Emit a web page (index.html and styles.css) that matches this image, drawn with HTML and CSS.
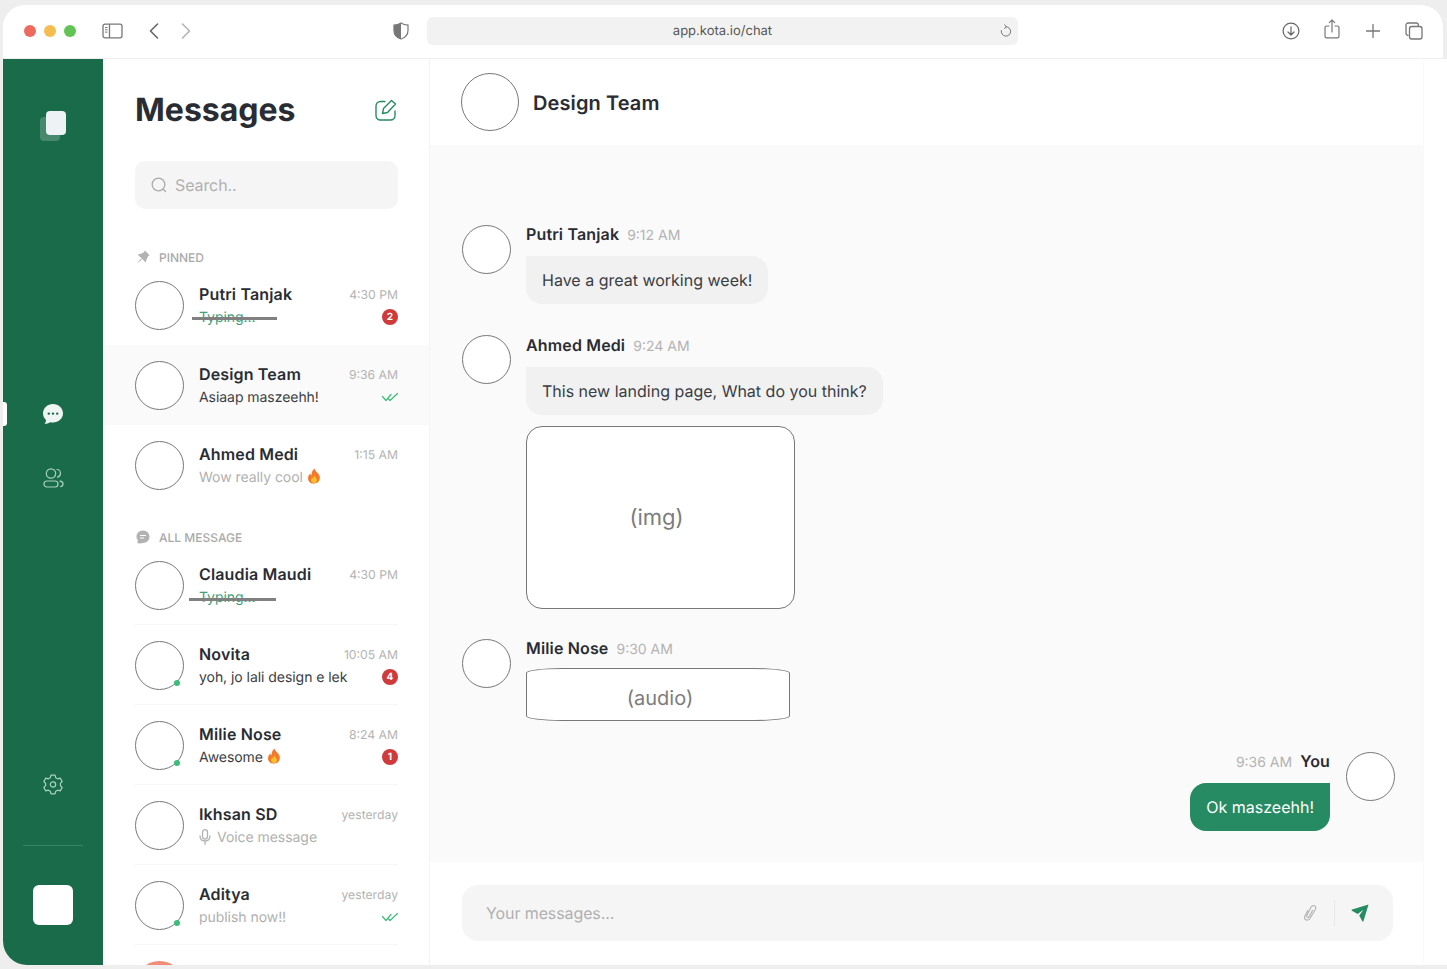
FILE: index.html
```html
<!DOCTYPE html>
<html lang="en">
<head>
    <meta charset="UTF-8">
    <meta name="viewport" content="width=device-width, initial-scale=1.0">
    <title>Kota Chat</title>
    <link rel="stylesheet" href="styles.css">
</head>
<body>
    <svg class="defs" width="0" height="0" aria-hidden="true">
        <symbol id="flame" viewBox="0 0 14 16">
            <path d="M7.4 0.4C8 3 11 4.600 12.300 7.200C13.800 10.300 12.300 15.400 7 15.600C2.200 15.700 0.300 11.700 1.300 8.500C1.700 7.200 2.500 6.200 3.300 5.500C3.400 6.500 3.800 7.300 4.500 7.700C4.300 5 5.300 2.200 7.400 0.400Z" fill="#f4792b"/>
            <path d="M7.300 7.500C7.700 9 9.900 10 9.900 12.200C9.900 14 8.600 15.100 7 15.100C5.400 15.100 4.100 14 4.100 12.300C4.100 10.900 5 10.200 5.600 9.500C6 10 6.300 10.300 6.700 10.400C6.500 9.500 6.600 8.400 7.300 7.500Z" fill="#fbc02d"/>
        </symbol>
        <symbol id="ticks" viewBox="0 0 16 10">
            <path d="M0.500 4.500L4 8.500L9 2.500M6.500 6.800L8 8.500L15.500 1.500" fill="none" stroke="#3dbb78" stroke-width="1.200" stroke-linecap="round" stroke-linejoin="round"/>
        </symbol>
    </svg>

    <div class="window">
        <header class="toolbar">
            <span class="light light-red"></span>
            <span class="light light-yellow"></span>
            <span class="light light-green"></span>

            <svg class="tool tool-sidebar" width="21" height="16" viewBox="0 0 21 16" fill="none" stroke="#777" stroke-width="1.300">
                <rect x="1" y="1.200" width="19" height="13.600" rx="2"/>
                <path d="M7.500 1.200V14.800"/>
                <path d="M3 4.500H5.500M3 6.800H5.500M3 9.100H5.500" stroke-width="1"/>
            </svg>
            <svg class="tool tool-back" width="10" height="16" viewBox="0 0 10 16" fill="none" stroke="#666" stroke-width="1.600" stroke-linecap="round" stroke-linejoin="round">
                <path d="M8.500 1L1.500 8L8.500 15"/>
            </svg>
            <svg class="tool tool-forward" width="10" height="16" viewBox="0 0 10 16" fill="none" stroke="#b5b5b5" stroke-width="1.600" stroke-linecap="round" stroke-linejoin="round">
                <path d="M1.500 1L8.500 8L1.500 15"/>
            </svg>
            <svg class="tool tool-shield" width="16" height="18" viewBox="0 0 16 18" fill="none">
                <path d="M8 1C10 2.300 12.500 3 15 3.100V8.500C15 12.500 12 15.700 8 17C4 15.700 1 12.500 1 8.500V3.100C3.500 3 6 2.300 8 1Z" stroke="#777" stroke-width="1.200"/>
                <path d="M8 1C6 2.300 3.500 3 1 3.100V8.500C1 12.500 4 15.700 8 17Z" fill="#777"/>
            </svg>

            <div class="address">
                <span>app.kota.io/chat</span>
                <svg class="address-reload" width="12" height="14" viewBox="0 0 12 14" fill="none" stroke="#777" stroke-width="1" stroke-linecap="round" stroke-linejoin="round">
                    <path d="M1.300 6.500A4.700 4.700 0 1 0 6 2.700"/>
                    <path d="M4.500 0.800L6.500 2.700L4.500 4.500"/>
                </svg>
            </div>

            <svg class="tool tool-download" width="18" height="18" viewBox="0 0 18 18" fill="none" stroke="#666" stroke-width="1.200" stroke-linecap="round" stroke-linejoin="round">
                <circle cx="9" cy="9" r="7.900"/>
                <path d="M9 4.800V12.800M6 10L9 13L12 10"/>
            </svg>
            <svg class="tool tool-share" width="16" height="20" viewBox="0 0 16 20" fill="none" stroke="#777" stroke-width="1.200" stroke-linecap="round" stroke-linejoin="round">
                <path d="M5 7H2.600C1.700 7 1 7.700 1 8.600V17.200C1 18.100 1.700 18.800 2.600 18.800H13.400C14.300 18.800 15 18.100 15 17.200V8.600C15 7.700 14.300 7 13.400 7H11"/>
                <path d="M8 13V1.200M5.300 3.600L8 1L10.700 3.600"/>
            </svg>
            <svg class="tool tool-plus" width="14" height="14" viewBox="0 0 14 14" fill="none" stroke="#777" stroke-width="1.300" stroke-linecap="round">
                <path d="M7 0.500V13.500M0.500 7H13.500"/>
            </svg>
            <svg class="tool tool-tabs" width="18" height="18" viewBox="0 0 18 18" fill="none" stroke="#777" stroke-width="1.300">
                <path d="M3.500 13.300H3C1.900 13.300 1 12.400 1 11.300V3C1 1.900 1.900 1 3 1H11.300C12.400 1 13.300 1.900 13.300 3V4"/>
                <rect x="4.500" y="4.500" width="12.500" height="12.500" rx="2.200"/>
            </svg>
        </header>

        <main class="app">
            <nav class="rail">
                <div class="rail-logo">
                    <span class="rail-logo-back"></span>
                    <span class="rail-logo-front"></span>
                </div>

                <span class="rail-marker"></span>
                <svg class="rail-chat" width="20" height="20" viewBox="0 0 20 20">
                    <path d="M10 0C15.500 0 20 4.100 20 9.300C20 14.500 15.500 18.600 10 18.600C9 18.600 8 18.500 7 18.200C5.500 19.200 3.700 19.800 1.500 19.800C2.500 18.500 3 17.300 3 15.900C1.100 14.300 0 12 0 9.300C0 4.100 4.500 0 10 0Z" fill="#eff5f2"/>
                    <circle cx="5.800" cy="9.600" r="1.200" fill="#1a6b4a"/>
                    <circle cx="10" cy="9.600" r="1.200" fill="#1a6b4a"/>
                    <circle cx="14.200" cy="9.600" r="1.200" fill="#1a6b4a"/>
                </svg>
                <svg class="rail-users" width="21" height="20" viewBox="0 0 21 20" fill="none" stroke="#a9d1c0" stroke-width="1.200" stroke-linecap="round">
                    <circle cx="8" cy="5.500" r="4.700"/>
                    <rect x="1" y="13" width="14" height="6" rx="3"/>
                    <path d="M14 1.500C16 1.500 17.500 3.300 17.500 5.300C17.500 7.200 16.200 8.800 14.500 9.200M17 13.200C18.900 13.400 20 14.500 20 16C20 17.300 19 18.400 17.700 18.700"/>
                </svg>
                <svg class="rail-gear" width="20" height="21" viewBox="0 0 20 21" fill="none" stroke="#a9d1c0" stroke-width="1.200" stroke-linejoin="round">
                    <circle cx="10" cy="10.500" r="2.700"/>
                    <path d="M8 1.200H12L12.700 3.700L14.700 4.800L17.200 4.100L19.200 7.500L17.400 9.300V11.700L19.200 13.500L17.200 16.900L14.700 16.200L12.700 17.300L12 19.800H8L7.300 17.300L5.300 16.200L2.800 16.900L0.800 13.500L2.600 11.700V9.300L0.800 7.500L2.800 4.100L5.300 4.800L7.300 3.700Z"/>
                </svg>
                <span class="rail-divider"></span>
                <div class="rail-avatar"></div>
            </nav>

            <section class="inbox">
                <div class="inbox-head">
                    <h1>Messages</h1>
                    <svg class="inbox-edit" width="22" height="22" viewBox="0 0 22 22" fill="none" stroke="#268b62" stroke-width="1.400" stroke-linecap="round" stroke-linejoin="round">
                        <path d="M10 2.500H5.500C3 2.500 1 4.500 1 7V16.500C1 19 3 21 5.500 21H15.500C18 21 20 19 20 16.500V12"/>
                        <path d="M16.500 1.500L20.500 5L12.500 13.500L7.500 14.500L8.500 9.500Z"/>
                    </svg>
                </div>

                <div class="search">
                    <svg width="16" height="16" viewBox="0 0 16 16" fill="none" stroke="#aaa" stroke-width="1.300" stroke-linecap="round">
                        <circle cx="7.500" cy="7.500" r="6.300"/>
                        <path d="M12.300 12.300L14.500 14.500"/>
                    </svg>
                    <span>Search..</span>
                </div>

                <div class="section-label section-pinned">
                    <svg width="14" height="14" viewBox="0 0 14 14" fill="#b2b2b2">
                        <path d="M8.800 0.600L13.600 5.200L12.200 6L10.400 9.800L9.800 12.400L1.600 4.600L4.400 4L8 2.200Z"/>
                        <path d="M4.800 8.800L0.800 13.200L5.800 9.800Z"/>
                    </svg>
                    PINNED
                </div>

                <article class="row">
                    <div class="avatar"></div>
                    <div class="row-body">
                        <div class="row-line"><b>Putri Tanjak</b><time>4:30 PM</time></div>
                        <div class="row-line">
                            <span class="sub sub-typing">Typing...</span>
                            <span class="badge">2</span>
                        </div>
                    </div>
                </article>
                <article class="row row-active">
                    <div class="avatar"></div>
                    <div class="row-body">
                        <div class="row-line"><b>Design Team</b><time>9:36 AM</time></div>
                        <div class="row-line">
                            <span class="sub sub-dark">Asiaap maszeehh!</span>
                            <svg class="tick" width="16" height="10"><use href="#ticks"/></svg>
                        </div>
                    </div>
                </article>
                <article class="row">
                    <div class="avatar"></div>
                    <div class="row-body">
                        <div class="row-line"><b>Ahmed Medi</b><time>1:15 AM</time></div>
                        <div class="row-line">
                            <span class="sub">Wow really cool <svg class="fire" width="14" height="16"><use href="#flame"/></svg></span>
                        </div>
                    </div>
                </article>

                <div class="section-label section-all">
                    <svg width="14" height="14" viewBox="0 0 14 14">
                        <path d="M7 0.500C10.700 0.500 13.500 3.300 13.500 6.800C13.500 10.300 10.700 13 7 13C4.500 13.500 2.500 13.500 1 13C2 12 2 11 1.800 10.300C1 9.300 0.500 8.100 0.500 6.800C0.500 3.300 3.300 0.500 7 0.500Z" fill="#b2b2b2"/>
                        <path d="M4.500 5.500H9.500M4.500 8H7.500" stroke="#fff" stroke-width="1.200" stroke-linecap="round"/>
                    </svg>
                    ALL MESSAGE
                </div>

                <article class="row row-split">
                    <div class="avatar"></div>
                    <div class="row-body">
                        <div class="row-line"><b>Claudia Maudi</b><time>4:30 PM</time></div>
                        <div class="row-line"><span class="sub sub-typing sub-typing-wide">Typing...</span></div>
                    </div>
                </article>
                <article class="row row-split">
                    <div class="avatar avatar-online"></div>
                    <div class="row-body">
                        <div class="row-line"><b>Novita</b><time>10:05 AM</time></div>
                        <div class="row-line">
                            <span class="sub sub-dark">yoh, jo lali design e lek</span>
                            <span class="badge">4</span>
                        </div>
                    </div>
                </article>
                <article class="row row-split">
                    <div class="avatar avatar-online"></div>
                    <div class="row-body">
                        <div class="row-line"><b>Milie Nose</b><time>8:24 AM</time></div>
                        <div class="row-line">
                            <span class="sub sub-dark">Awesome <svg class="fire" width="14" height="16"><use href="#flame"/></svg></span>
                            <span class="badge">1</span>
                        </div>
                    </div>
                </article>
                <article class="row row-split">
                    <div class="avatar"></div>
                    <div class="row-body">
                        <div class="row-line"><b>Ikhsan SD</b><time>yesterday</time></div>
                        <div class="row-line">
                            <span class="sub sub-voice">
                                <svg width="12" height="16" viewBox="0 0 12 16" fill="none" stroke="#b2b2b2" stroke-width="1.300" stroke-linecap="round">
                                    <rect x="3.500" y="0.700" width="5" height="9.300" rx="2.500"/>
                                    <path d="M1 6.800C1 10 3 12 6 12C9 12 11 10 11 6.800M6 12V15.300"/>
                                </svg>
                                Voice message
                            </span>
                        </div>
                    </div>
                </article>
                <article class="row row-split">
                    <div class="avatar avatar-online"></div>
                    <div class="row-body">
                        <div class="row-line"><b>Aditya</b><time>yesterday</time></div>
                        <div class="row-line">
                            <span class="sub">publish now!!</span>
                            <svg class="tick" width="16" height="10"><use href="#ticks"/></svg>
                        </div>
                    </div>
                </article>
                <article class="row">
                    <div class="avatar avatar-coral"></div>
                </article>
            </section>

            <section class="chat">
                <div class="chat-head">
                    <div class="avatar avatar-large"></div>
                    <h2>Design Team</h2>
                </div>

                <div class="thread">
                    <div class="msg msg-first">
                        <div class="avatar"></div>
                        <div class="msg-body">
                            <div class="msg-meta"><b>Putri Tanjak</b><time>9:12 AM</time></div>
                            <p class="bubble">Have a great working week!</p>
                        </div>
                    </div>
                    <div class="msg msg-second">
                        <div class="avatar"></div>
                        <div class="msg-body">
                            <div class="msg-meta"><b>Ahmed Medi</b><time>9:24 AM</time></div>
                            <p class="bubble">This new landing page, What do you think?</p>
                            <div class="attach-img"><span>(img)</span></div>
                        </div>
                    </div>
                    <div class="msg msg-third">
                        <div class="avatar"></div>
                        <div class="msg-body">
                            <div class="msg-meta"><b>Milie Nose</b><time>9:30 AM</time></div>
                            <div class="attach-audio">(audio)</div>
                        </div>
                    </div>
                    <div class="msg msg-own">
                        <div class="avatar"></div>
                        <div class="msg-body">
                            <div class="msg-meta"><time>9:36 AM</time><b>You</b></div>
                            <p class="bubble bubble-own">Ok maszeehh!</p>
                        </div>
                    </div>
                </div>

                <div class="composer">
                    <div class="composer-box">
                        <span class="composer-text">Your messages...</span>
                        <svg class="composer-clip" width="14" height="16" viewBox="0 0 14 16" fill="none" stroke="#b5b5b5" stroke-width="1.200" stroke-linecap="round" stroke-linejoin="round">
                            <path d="M4.800 5.500L2 10.800C1 12.800 1.800 14.600 3.300 15C4.800 15.400 6.300 14.800 7.200 13L12.300 4.500C13.200 2.700 12.700 1.300 11.400 0.800C10 0.300 8.800 0.900 8 2.300L3.900 10.200C3.400 11.300 3.700 12 4.400 12.300C5.100 12.600 5.800 12.300 6.300 11.400L9.600 5.300"/>
                        </svg>
                        <span class="composer-divider"></span>
                        <svg class="composer-send" width="18" height="18" viewBox="0 0 18 18">
                            <path d="M17.500 0.500L12.500 17C12.300 17.600 11.600 17.700 11.300 17.200L8.200 11.500L12.500 5.700L6.600 9.900L0.900 6.800C0.400 6.500 0.500 5.800 1.100 5.600Z" fill="#268b62"/>
                        </svg>
                    </div>
                </div>
            </section>
        </main>
    </div>
</body>
</html>
```

FILE: styles.css
```css
* {
    box-sizing: border-box;
}

html, body {
    height: 100%;
}

body {
    margin: 0;
    padding: 5px 0 4px 3px;
    background-color: #eeeeee;
    color: #292c33;
    font-family: Inter, "Liberation Sans", sans-serif;
    text-rendering: geometricPrecision;
    overflow: hidden;
}

h1, h2, p {
    margin: 0;
}

time {
    color: #b3b3b3;
    font-size: 12.2px;
    font-weight: 400;
}

.defs {
    position: absolute;
}

.window {
    display: flex;
    flex-direction: column;
    height: 960px;
}

/* browser bar */

.toolbar {
    display: flex;
    align-items: center;
    flex: none;
    height: 53px;
    margin-right: 4px;
    padding-left: 21px;
    padding-bottom: 2px;
    background-color: #ffffff;
    border-radius: 22px 22px 0 0;
}

.light {
    width: 12px;
    height: 12px;
    margin-right: 8px;
    border-radius: 50%;
}

.light-red {
    background-color: #ee6a5f;
}

.light-yellow {
    background-color: #f5bd4f;
}

.light-green {
    background-color: #61c454;
}

.tool {
    flex: none;
}

.tool-sidebar {
    margin-left: 18px;
}

.tool-back {
    margin-left: 26px;
}

.tool-forward {
    margin-left: 22px;
}

.tool-shield {
    margin-left: 202px;
}

.address {
    position: relative;
    width: 591px;
    height: 28px;
    margin-left: 18px;
    background-color: #f2f2f2;
    border-radius: 6px;
    color: #555555;
    font-size: 13px;
    line-height: 28px;
    text-align: center;
}

.address-reload {
    position: absolute;
    top: 7px;
    right: 6px;
}

.tool-download {
    margin-left: 264px;
}

.tool-share {
    margin-left: 24px;
    margin-top: -3px;
}

.tool-plus {
    margin-left: 26px;
}

.tool-tabs {
    margin-left: 25px;
}

/* app */

.app {
    display: flex;
    flex: 1;
    min-height: 0;
    background-color: #ffffff;
    border-top: 1px solid #eeeeee;
    border-bottom-left-radius: 24px;
    overflow: hidden;
}

.rail {
    position: relative;
    display: flex;
    flex-direction: column;
    align-items: center;
    flex: none;
    width: 100px;
    padding-top: 52px;
    background-color: #1a6b4a;
}

.rail-logo {
    position: relative;
    width: 26px;
    height: 30px;
}

.rail-logo-back {
    position: absolute;
    left: 0;
    bottom: 0;
    width: 20px;
    height: 24px;
    background-color: rgba(255, 255, 255, 0.2);
    border-radius: 4px;
}

.rail-logo-front {
    position: absolute;
    right: 0;
    top: 0;
    width: 20px;
    height: 24px;
    background-color: #eff2f5;
    border-radius: 4px;
}

.rail-marker {
    position: absolute;
    top: 343px;
    left: 0;
    width: 4px;
    height: 24px;
    background-color: #ffffff;
    border-radius: 0 3px 3px 0;
}

.rail-chat {
    margin-top: 263px;
}

.rail-users {
    margin-top: 44px;
}

.rail-gear {
    margin-top: 286px;
}

.rail-divider {
    width: 60px;
    height: 1px;
    margin-top: 50px;
    background-color: #3a8466;
}

.rail-avatar {
    width: 40px;
    height: 40px;
    margin-top: 39px;
    background-color: #ffffff;
    border-radius: 6px;
}

/* conversation list */

.inbox {
    flex: none;
    width: 327px;
    border-right: 1px solid #f4f4f4;
    overflow: hidden;
}

.inbox-head {
    display: flex;
    align-items: center;
    justify-content: space-between;
    padding: 31px 31px 0 32px;
}

.inbox-head h1 {
    font-size: 32px;
    font-weight: 700;
    line-height: 39px;
}

.inbox-edit {
    margin-right: 1px;
}

.search {
    display: flex;
    align-items: center;
    gap: 8px;
    height: 48px;
    margin: 32px 31px 0 32px;
    padding-left: 16px;
    background-color: #f5f5f5;
    border-radius: 10px;
    color: #b0b0b0;
    font-size: 16px;
    letter-spacing: -0.1px;
}

.section-label {
    display: flex;
    align-items: center;
    gap: 9px;
    height: 16px;
    padding-left: 33px;
    color: #a9a9a9;
    font-size: 12px;
    font-weight: 500;
}

.section-pinned {
    margin-top: 40px;
}

.section-all {
    margin-top: 24px;
}

.row {
    display: flex;
    gap: 15px;
    height: 80px;
    padding: 16px 31px 0 32px;
}

.row-active {
    background-color: #fafafa;
}

.row-split {
    position: relative;
}

.row-split::after {
    content: "";
    position: absolute;
    left: 32px;
    right: 31px;
    bottom: 0;
    height: 1px;
    background-color: #f6f6f6;
}

.row-body {
    flex: 1;
    min-width: 0;
    padding-top: 3px;
}

.row-line {
    display: flex;
    align-items: center;
    justify-content: space-between;
    height: 20px;
    margin-bottom: 3px;
}

.row-line b {
    font-size: 16px;
    font-weight: 600;
    letter-spacing: 0.15px;
}

.sub {
    position: relative;
    color: #b0b0b0;
    font-size: 14px;
    letter-spacing: -0.05px;
}

.sub-dark {
    color: #3a3d44;
}

.sub-typing {
    color: #42a07a;
}

.sub-typing::after {
    content: "";
    position: absolute;
    top: 8px;
    left: -7px;
    width: 85px;
    height: 3px;
    background-color: #808080;
}

.sub-typing-wide::after {
    top: 9px;
    left: -10px;
    width: 87px;
}

.sub-voice {
    display: flex;
    align-items: center;
    gap: 6px;
}

.fire {
    vertical-align: -2px;
}

.badge {
    width: 16px;
    height: 16px;
    background-color: #cf3a3a;
    border-radius: 50%;
    color: #ffffff;
    font-size: 10px;
    font-weight: 700;
    line-height: 16px;
    text-align: center;
}

.avatar {
    position: relative;
    flex: none;
    width: 49px;
    height: 49px;
    background-color: #ffffff;
    border: 1px solid #777777;
    border-radius: 50%;
}

.avatar-large {
    width: 58px;
    height: 58px;
}

.avatar-online::after {
    content: "";
    position: absolute;
    right: 3px;
    bottom: 3px;
    width: 6px;
    height: 6px;
    background-color: #3dbb78;
    border-radius: 50%;
}

.avatar-coral {
    border: none;
    background-color: #f28b78;
}

/* chat */

.chat {
    display: flex;
    flex-direction: column;
    flex: none;
    width: 994px;
    border-right: 1px solid #f9f9f9;
}

.chat-head {
    display: flex;
    align-items: center;
    gap: 14px;
    flex: none;
    height: 86px;
    padding-left: 31px;
}

.chat-head h2 {
    margin-top: 2px;
    font-size: 20px;
    font-weight: 600;
    letter-spacing: 0.1px;
}

.thread {
    flex: 1;
    padding: 79px 28px 0 32px;
    background-color: #fafafa;
}

.msg {
    display: flex;
    gap: 15px;
}

.msg .avatar {
    margin-top: 1px;
}

.msg-second {
    margin-top: 31px;
}

.msg-second .avatar {
    margin-top: 0;
}

.msg-third {
    margin-top: 29px;
}

.msg-own {
    flex-direction: row-reverse;
    gap: 16px;
    margin-top: 30px;
}

.msg-body {
    display: flex;
    flex-direction: column;
    align-items: flex-start;
}

.msg-own .msg-body {
    align-items: flex-end;
}

.msg-meta {
    display: flex;
    align-items: center;
    gap: 8px;
    height: 20px;
    margin-bottom: 12px;
}

.msg-meta b {
    font-size: 16px;
    font-weight: 600;
    letter-spacing: 0.15px;
}

.msg-meta time {
    position: relative;
    top: 1px;
    font-size: 14px;
}

.msg-third .msg-meta {
    margin-bottom: 10px;
}

.bubble {
    padding: 0 16px;
    background-color: #f1f1f1;
    border-radius: 1px 16px 16px 16px;
    color: #3a3d44;
    font-size: 16px;
    line-height: 48px;
}

.bubble-own {
    background-color: #268b62;
    border-radius: 16px 0 16px 16px;
    color: #ffffff;
}

.attach-img {
    display: flex;
    align-items: center;
    justify-content: center;
    width: 269px;
    height: 183px;
    margin-top: 11px;
    padding-right: 8px;
    background-color: #ffffff;
    border: 1px solid #777777;
    border-radius: 16px;
    color: #7c7c7c;
    font-size: 22px;
}

.attach-audio {
    display: flex;
    align-items: center;
    justify-content: center;
    width: 264px;
    height: 53px;
    padding: 7px 0 0 4px;
    background-color: #ffffff;
    border: 1px solid #777777;
    border-radius: 36px / 5px;
    color: #7c7c7c;
    font-size: 20px;
}

.composer {
    flex: none;
    height: 103px;
    padding: 23px 30px 0 32px;
}

.composer-box {
    display: flex;
    align-items: center;
    height: 56px;
    padding: 0 24px;
    background-color: #f5f5f5;
    border-radius: 16px;
}

.composer-text {
    flex: 1;
    color: #b0b0b0;
    font-size: 16px;
    letter-spacing: -0.1px;
}

.composer-divider {
    width: 1px;
    height: 26px;
    margin: 0 16px 0 17px;
    background-color: #e8e8e8;
}
```
